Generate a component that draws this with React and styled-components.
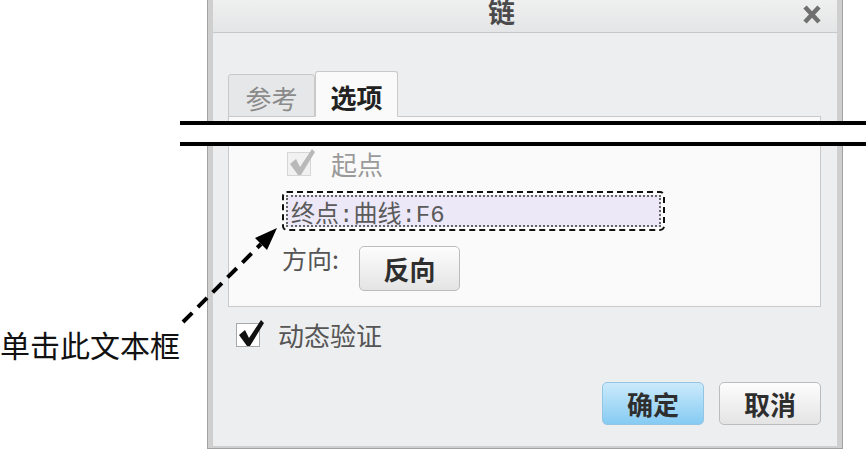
import styled, { createGlobalStyle } from 'styled-components'

const Global = createGlobalStyle`
    html, body {
        margin: 0;
        background: #fff;
        overflow: hidden;
    }
    body {
        font-family: "Noto Sans CJK SC", "Noto Sans", sans-serif;
    }
`

const Page = styled.div`
    position: relative;
    display: flex;
    width: 866px;
    height: 449px;
    overflow: hidden;
`

const Side = styled.div`
    width: 207px;
    flex-shrink: 0;
    padding-top: 332px;
    .note {
        margin: 0;
        font-family: "Liberation Serif", "Noto Sans CJK SC", serif;
        font-size: 30px;
        line-height: 30px;
        color: #111;
        white-space: nowrap;
    }
`

const Dialog = styled.div`
    width: 636px;
    height: 461px;
    margin-top: -12px;
    box-sizing: border-box;
    border: 1px solid #a2a2a2;
    border-top: none;
    padding: 0 5px 2px 5px;
    background: #cfcfcf;
    display: flex;
`

const Inner = styled.div`
    flex: 1;
    display: flex;
    flex-direction: column;
    background: #eceef0;
`

const TitleBar = styled.div`
    height: 45px;
    box-sizing: border-box;
    display: flex;
    align-items: center;
    padding: 0 15px 0 275px;
    background: linear-gradient(#f3f3f3, #e4e5e6);
    border-bottom: 1px solid #c6c7c8;
    .title {
        font-size: 27px;
        font-weight: 700;
        color: #4a4a4a;
        line-height: 22px;
        margin-top: 3px;
    }
    .close {
        margin-left: auto;
        margin-top: 8px;
        display: flex;
    }
`

const Body = styled.div`
    flex: 1;
    display: flex;
    flex-direction: column;
    padding: 0 16px 0 15px;
`

const Tabs = styled.div`
    margin-top: 38px;
    display: flex;
    align-items: flex-end;
    position: relative;
    z-index: 1;
    margin-bottom: -1px;
`

const Tab = styled.div`
    width: ${p => p.$w}px;
    height: ${p => (p.$active ? 46 : 43)}px;
    box-sizing: border-box;
    display: flex;
    align-items: center;
    justify-content: center;
    font-size: 26px;
    font-weight: ${p => (p.$active ? 700 : 400)};
    color: ${p => (p.$active ? '#222' : '#8a8a8a')};
    background: ${p => (p.$active ? '#fafafa' : '#e6e7e8')};
    border: 1px solid #c9c9c9;
    border-bottom-color: ${p => (p.$active ? '#fafafa' : '#c9c9c9')};
    border-radius: 3px 3px 0 0;
    padding-top: 4px;
`

const Panel = styled.div`
    height: 191px;
    box-sizing: border-box;
    background: #fafafa;
    border: 1px solid #c9c9c9;
    padding: 35px 0 0 53px;
    display: flex;
    flex-direction: column;
    align-items: flex-start;
`

const CheckRow = styled.label`
    display: flex;
    align-items: center;
    gap: ${p => p.$gap}px;
    margin-left: ${p => p.$indent}px;
    margin-top: ${p => p.$top || 0}px;
    font-size: 26px;
    line-height: 24px;
    color: ${p => (p.$disabled ? '#9a9a9a' : '#555')};
`

const Box = styled.span`
    position: relative;
    width: 24px;
    height: 24px;
    box-sizing: border-box;
    border: 1px solid ${p => (p.$disabled ? '#d6d6d6' : '#a8a8a8')};
    background: ${p => (p.$disabled ? '#f1f1f1' : '#fff')};
    svg {
        position: absolute;
        left: 0;
        top: -6px;
    }
`

const Field = styled.div`
    margin-top: 15px;
    width: 383px;
    height: 40px;
    box-sizing: border-box;
    border: 2px dashed #111;
    border-radius: 5px;
    padding: 2px;
    .in {
        height: 100%;
        box-sizing: border-box;
        border: 2px dotted #666;
        background: #ece8f8;
        display: flex;
        align-items: center;
        padding-left: 3px;
        font-family: "Liberation Mono", "Noto Sans CJK SC", monospace;
        font-size: 24px;
        color: #5a5a5a;
        white-space: nowrap;
    }
`

const DirRow = styled.div`
    margin-top: 15px;
    display: flex;
    align-items: flex-start;
    gap: 20px;
    font-size: 25px;
    color: #555;
    .label {
        line-height: 1;
        margin-top: 0;
    }
`

const Button = styled.div`
    width: ${p => p.$w}px;
    height: ${p => p.$h}px;
    box-sizing: border-box;
    display: flex;
    align-items: center;
    justify-content: center;
    font-size: 26px;
    font-weight: 700;
    color: #2e2e2e;
    border-radius: 5px;
    border: 1px solid ${p => (p.$primary ? '#93c6e4' : '#bcbcbc')};
    background: ${p => (p.$primary
        ? 'linear-gradient(#cbeafb, #86cbf3)'
        : 'linear-gradient(#fdfdfd, #e4e4e4)')};
`

const Footer = styled.div`
    margin-top: 35px;
    display: flex;
    justify-content: flex-end;
    gap: 15px;
`

const Arrow = styled.svg`
    position: absolute;
    left: 0;
    top: 0;
    pointer-events: none;
`

const Cut = styled.div`
    position: absolute;
    left: 180px;
    right: 0;
    top: 121px;
    height: 25px;
    box-sizing: border-box;
    background: #fff;
    border-top: 4px solid #000;
    border-bottom: 4px solid #000;
`

function Check({ color }) {
    return (
        <svg width="28" height="30" viewBox="0 0 28 30">
            <path d="M2 17 L8 12 L12 20 L24 2 L27 5 L13 28 L10 28 Z" fill={color} />
        </svg>
    )
}

export default function App() {
    return (
        <>
            <Global />
            <Page>
                <Side>
                    <p className="note">单击此文本框</p>
                </Side>
                <Dialog>
                    <Inner>
                        <TitleBar>
                            <span className="title">链</span>
                            <span className="close">
                                <svg width="20" height="19" viewBox="0 0 20 19">
                                    <path d="M3 2 L17 17 M17 2 L3 17" stroke="#707070" strokeWidth="4.5" />
                                </svg>
                            </span>
                        </TitleBar>
                        <Body>
                            <Tabs>
                                <Tab $w={87}>参考</Tab>
                                <Tab $w={83} $active>选项</Tab>
                            </Tabs>
                            <Panel>
                                <CheckRow $disabled $gap={20} $indent={5}>
                                    <Box $disabled><Check color="#b9b9b9" /></Box>
                                    起点
                                </CheckRow>
                                <Field>
                                    <div className="in">终点:曲线:F6</div>
                                </Field>
                                <DirRow>
                                    <span className="label">方向:</span>
                                    <Button $w={101} $h={45}>反向</Button>
                                </DirRow>
                            </Panel>
                            <CheckRow $gap={18} $indent={8} $top={16}>
                                <Box><Check color="#111" /></Box>
                                动态验证
                            </CheckRow>
                            <Footer>
                                <Button $w={102} $h={43} $primary>确定</Button>
                                <Button $w={102} $h={43}>取消</Button>
                            </Footer>
                        </Body>
                    </Inner>
                </Dialog>
                <Cut />
                <Arrow width="866" height="449">
                    <line x1="183" y1="322" x2="261" y2="244" stroke="#000" strokeWidth="4" strokeDasharray="13 8" />
                    <polygon points="277,228 267,250 255,238" fill="#000" />
                </Arrow>
            </Page>
        </>
    )
}
